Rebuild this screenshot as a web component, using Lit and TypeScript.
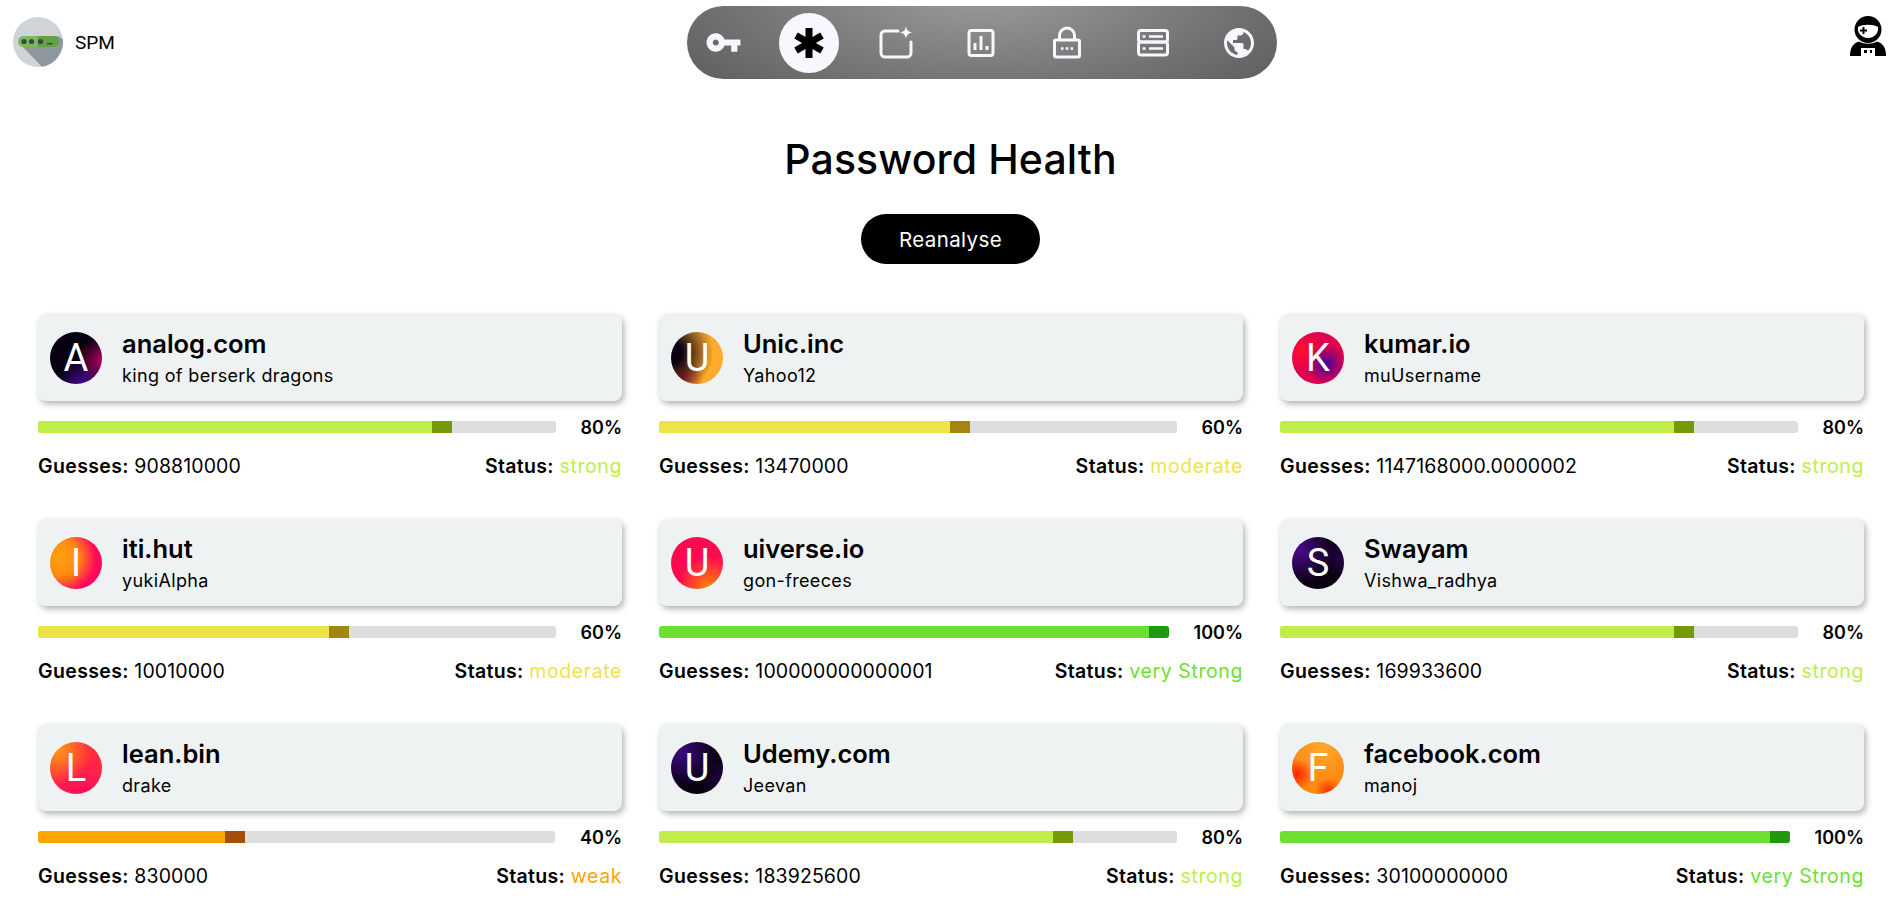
import { LitElement, html, css, svg } from "lit";
import { customElement } from "lit/decorators.js";

const LEVELS: Record<string, { main: string; dark: string; pct: number }> = {
  weak: { main: "#ffa500", dark: "#a24f0e", pct: 40 },
  moderate: { main: "#efe34a", dark: "#a3860e", pct: 60 },
  strong: { main: "#c0ed49", dark: "#759a06", pct: 80 },
  "very Strong": { main: "#6de031", dark: "#1f9a0f", pct: 100 },
};

const ENTRIES = [
  { site: "analog.com", user: "king of berserk dragons", guesses: "908810000", status: "strong", bg: "radial-gradient(circle at 100% 55%, #b0005f 0, transparent 42%), radial-gradient(circle at 65% 105%, #4a0a9a 0, transparent 45%), #060010" },
  { site: "Unic.inc", user: "Yahoo12", guesses: "13470000", status: "moderate", bg: "radial-gradient(circle at 0% 40%, #0a0010 18%, transparent 70%), radial-gradient(circle at 20% 90%, #c0202a 0, transparent 35%), #ffab2e" },
  { site: "kumar.io", user: "muUsername", guesses: "1147168000.0000002", status: "strong", bg: "radial-gradient(circle at 65% 62%, #3a0a9a 0, transparent 42%), radial-gradient(circle at 20% 35%, #ff1030 0, transparent 40%), #e0004f" },
  { site: "iti.hut", user: "yukiAlpha", guesses: "10010000", status: "moderate", bg: "radial-gradient(circle at 20% 40%, #ffa010 0, #ff8a10 35%, transparent 68%), #ff0a5a" },
  { site: "uiverse.io", user: "gon-freeces", guesses: "100000000000001", status: "very Strong", bg: "radial-gradient(circle at 75% 100%, #ff8c00 0, transparent 50%), #ff0a50" },
  { site: "Swayam", user: "Vishwa_radhya", guesses: "169933600", status: "strong", bg: "radial-gradient(circle at 15% 25%, #4a0a8a 0, transparent 60%), radial-gradient(circle at 100% 40%, #2a0050 0, transparent 35%), #08000f" },
  { site: "lean.bin", user: "drake", guesses: "830000", status: "weak", bg: "radial-gradient(circle at 15% 15%, #ff9a10 0, transparent 55%), radial-gradient(circle at 60% 100%, #ff0a60 0, transparent 60%), #ff2a40" },
  { site: "Udemy.com", user: "Jeevan", guesses: "183925600", status: "strong", bg: "radial-gradient(circle at 20% 20%, #3a0a80 0, transparent 60%), radial-gradient(circle at 100% 70%, #200040 0, transparent 40%), #08000f" },
  { site: "facebook.com", user: "manoj", guesses: "30100000000", status: "very Strong", bg: "radial-gradient(circle at 10% 62%, #ff2000 0, transparent 28%), radial-gradient(circle at 70% 95%, #ff3000 0, transparent 22%), radial-gradient(circle at 60% 10%, #ffa828 0, transparent 60%), #ff8a14" },
];

const navIcons = [
  svg`<svg width="37" height="37" viewBox="0 0 24 24" fill="#f7f8ff"><path d="M12.65 10C11.83 7.67 9.61 6 7 6c-3.31 0-6 2.69-6 6s2.69 6 6 6c2.61 0 4.83-1.67 5.65-4H17v4h4v-4h2v-4H12.65zM7 14c-1.1 0-2-.9-2-2s.9-2 2-2 2 .9 2 2-.9 2-2 2z"/></svg>`,
  svg`<svg width="34" height="34" viewBox="0 0 34 34" stroke="#000" stroke-width="7"><path d="M17 2v30M4 9.5l26 15M30 9.5l-26 15"/></svg>`,
  svg`<svg width="36" height="36" viewBox="0 0 36 36" fill="none" stroke="#f7f8ff" stroke-width="3" stroke-linecap="round"><path d="M21 6H8a4 4 0 0 0-4 4v18a4 4 0 0 0 4 4h22a4 4 0 0 0 4-4V17"/><path d="M29 1c.6 4.2 2.300 6 6.500 6.500-4.200.6-5.900 2.300-6.500 6.500-.6-4.200-2.300-5.900-6.500-6.500C26.700 7 28.400 5.200 29 1z" fill="#f7f8ff" stroke="none"/></svg>`,
  svg`<svg width="36" height="36" viewBox="0 0 36 36" fill="none" stroke="#f7f8ff" stroke-width="3"><rect x="6" y="5.500" width="24" height="25" rx="2.500"/><path d="M12 18v7M18 11v14M24 21v4"/></svg>`,
  svg`<svg width="36" height="36" viewBox="0 0 36 36" fill="none" stroke="#f7f8ff" stroke-width="3"><rect x="5.500" y="15" width="25" height="17" rx="1.500"/><path d="M10.500 15v-4.500a7.500 7.500 0 0 1 15 0V15"/><path d="M12 23.500h2.500M16.800 23.500h2.500M21.600 23.500h2.500" stroke-width="2.500"/></svg>`,
  svg`<svg width="36" height="36" viewBox="0 0 36 36" fill="none" stroke="#f7f8ff" stroke-width="3"><rect x="3.500" y="5.500" width="29" height="11.500" rx="2.500"/><rect x="3.500" y="17" width="29" height="13" rx="2.500"/><path d="M7.500 11.500h3M14 11.500h14M7.500 23.500h3M14 23.500h14" stroke-width="2.500"/></svg>`,
  svg`<svg width="36" height="36" viewBox="0 0 24 24" fill="#f7f8ff"><path d="M12 2C6.480 2 2 6.480 2 12s4.480 10 10 10 10-4.480 10-10S17.520 2 12 2zm-1 17.930c-3.950-.490-7-3.850-7-7.930 0-.620.080-1.210.210-1.790L9 15v1c0 1.100.900 2 2 2v1.930zm6.900-2.540c-.260-.810-1-1.390-1.900-1.390h-1v-3c0-.550-.450-1-1-1H8v-2h2c.550 0 1-.450 1-1V7h2c1.100 0 2-.900 2-2v-.410c2.930 1.190 5 4.060 5 7.410 0 2.080-.800 3.970-2.100 5.390z"/></svg>`,
];

@customElement("app-root")
export class AppRoot extends LitElement {
  static styles = css`
    :host {
      display: block;
      font-family: Inter, "Noto Sans", sans-serif;
      color: #000;
      background: #fff;
      height: 907px;
      overflow: hidden;
    }
    .top {
      display: flex;
      justify-content: space-between;
      align-items: flex-start;
      padding: 6px 11px 0 13px;
    }
    .brand {
      display: flex;
      align-items: center;
      gap: 12px;
      margin-top: 11px;
      font-family: Roboto, sans-serif;
      font-size: 19px;
    }
    .brand svg,
    .user svg {
      display: block;
    }
    .user {
      margin-top: 10px;
    }
    .nav {
      display: flex;
      align-items: center;
      height: 73px;
      width: 590px;
      box-sizing: border-box;
      padding: 0 8px 0 6px;
      justify-content: space-between;
      border-radius: 37px;
      background: radial-gradient(ellipse 62% 190% at 50% -20%, #9c9c9c 0%, #606060 100%);
    }
    .nav-item {
      width: 60px;
      height: 60px;
      border-radius: 50%;
      display: flex;
      align-items: center;
      justify-content: center;
    }
    .nav-item.active {
      background: #f7f8ff;
    }
    .intro {
      padding-left: 4px;
    }
    .heading {
      margin: 49px 0 0;
      height: 62px;
      line-height: 62px;
      text-align: center;
      font-size: 41px;
      font-weight: 540;
      letter-spacing: 0.1px;
    }
    .action {
      display: flex;
      justify-content: center;
      margin-top: 24px;
    }
    .action button {
      width: 179px;
      height: 50px;
      border: none;
      border-radius: 25px;
      background: #000;
      color: #fff;
      font: 400 20.5px Inter, sans-serif;
      letter-spacing: 0.4px;
    }
    .grid {
      display: grid;
      grid-template-columns: repeat(3, 584px);
      column-gap: 37px;
      row-gap: 41px;
      padding: 50px 0 0 38px;
    }
    .head {
      display: flex;
      align-items: center;
      gap: 20px;
      height: 87px;
      padding-left: 12px;
      background: #eef2f3;
      border-radius: 8px;
      box-shadow: 2px 3px 6px rgba(0, 0, 0, 0.3);
    }
    .avatar {
      flex: none;
      width: 52px;
      height: 52px;
      border-radius: 50%;
      display: flex;
      align-items: center;
      justify-content: center;
      color: #fff;
      font: 400 38px Roboto, sans-serif;
    }
    .site {
      font-size: 25.5px;
      font-weight: 560;
      line-height: 30px;
      margin-top: 2px;
    }
    .name {
      font-size: 18px;
      line-height: 24px;
      margin-top: 5px;
      letter-spacing: 0.35px;
    }
    .meter {
      display: flex;
      align-items: center;
      gap: 25px;
      margin-top: 14px;
      height: 24px;
    }
    .track {
      flex: 1;
      height: 12px;
      background: #dedede;
      border-radius: 3px;
      overflow: hidden;
    }
    .fill {
      height: 100%;
      display: flex;
      justify-content: flex-end;
    }
    .fill i {
      display: block;
      width: 20px;
      height: 100%;
    }
    .pct {
      font-size: 18px;
      font-weight: 560;
    }
    .info {
      display: flex;
      justify-content: space-between;
      margin-top: 15px;
      font-size: 19.5px;
      line-height: 24px;
      letter-spacing: 0.1px;
    }
    .info b {
      font-weight: 560;
      letter-spacing: 0.35px;
    }
    .state {
      letter-spacing: 0.6px;
    }
  `;

  render() {
    return html`
      <div class="top">
        <div class="brand">
          <svg width="50" height="50" viewBox="0 0 50 50">
            <circle cx="25" cy="25" r="25" fill="#cfd4d8"></circle>
            <path d="M6 26 L29 49.700 A25 25 0 0 0 49.800 22 L45 19 Z" fill="#8f979e"></path>
            <rect x="5" y="19" width="41" height="11" rx="5.500" fill="#78bb5a"></rect>
            <path d="M25 19h15.500a5.500 5.500 0 0 1 0 11H25z" fill="#5fa344"></path>
            <circle cx="11" cy="24.500" r="2.600" fill="#3f444a"></circle>
            <circle cx="18.500" cy="24.500" r="2.600" fill="#3f444a"></circle>
            <circle cx="27.500" cy="24.500" r="2.600" fill="#3f444a"></circle>
            <rect x="34" y="26" width="5.500" height="1.500" fill="#3f444a"></rect>
          </svg>
          <span>SPM</span>
        </div>
        <div class="nav">
          ${navIcons.map((icon, i) => html`<div class="nav-item ${i === 1 ? "active" : ""}">${icon}</div>`)}
        </div>
        <div class="user">
          <svg width="36" height="40" viewBox="0 0 36 40">
            <path d="M0 40c0-8 3-13 9-14.500 5 3 13 3 18 0C33 27 36 32 36 40z" fill="#000"></path>
            <circle cx="18" cy="13.500" r="13.500" fill="#000"></circle>
            <path d="M8 11c5-3 15-3 20 0 1 5-3 11-10 11S7 16 8 11z" fill="#fff"></path>
            <path d="M13.500 11v7M10 14.500h7" stroke="#000" stroke-width="2"></path>
            <rect x="11" y="32" width="14" height="8" fill="#fff"></rect>
            <rect x="14" y="34" width="3" height="3" fill="#000"></rect>
            <rect x="20" y="34" width="2" height="3" fill="#000"></rect>
          </svg>
        </div>
      </div>
      <div class="intro">
        <h1 class="heading">Password Health</h1>
        <div class="action"><button>Reanalyse</button></div>
      </div>
      <div class="grid">
        ${ENTRIES.map((e) => {
          const lv = LEVELS[e.status];
          return html`
            <div class="card">
              <div class="head">
                <div class="avatar" style="background:${e.bg}">${e.site[0].toUpperCase()}</div>
                <div>
                  <div class="site">${e.site}</div>
                  <div class="name">${e.user}</div>
                </div>
              </div>
              <div class="meter">
                <div class="track">
                  <div class="fill" style="width:${lv.pct}%;background:${lv.main}">
                    <i style="background:${lv.dark}"></i>
                  </div>
                </div>
                <span class="pct">${lv.pct}%</span>
              </div>
              <div class="info">
                <span><b>Guesses:</b> ${e.guesses}</span>
                <span><b>Status:</b> <span class="state" style="color:${lv.main}">${e.status}</span></span>
              </div>
            </div>
          `;
        })}
      </div>
    `;
  }
}
